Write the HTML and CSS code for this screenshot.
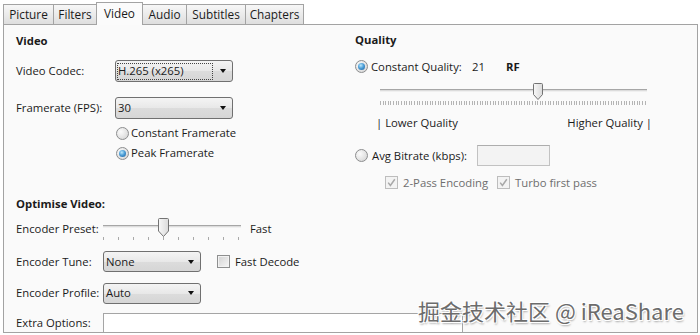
FILE: index.html
```html
<!DOCTYPE html>
<html>
<head>
<meta charset="utf-8">
<link rel="stylesheet" href="styles.css">
</head>
<body>
<div class="tabs">
  <div class="tab t-picture">Picture</div>
  <div class="tab t-filters">Filters</div>
  <div class="tab t-video active">Video</div>
  <div class="tab t-audio">Audio</div>
  <div class="tab t-subs">Subtitles</div>
  <div class="tab t-chap">Chapters</div>
</div>
<div class="panel">
  <div class="col left">
    <div class="heading">Video</div>
    <div class="row r-codec">
      <span class="label lw-top">Video Codec:</span>
      <div class="select s-wide"><span class="focus">H.265 (x265)</span><i class="arrow"></i></div>
    </div>
    <div class="row r-fps">
      <span class="label lw-top">Framerate (FPS):</span>
      <div class="select s-wide"><span class="val">30</span><i class="arrow"></i></div>
    </div>
    <div class="row r-cfr">
      <span class="radio"></span><span class="rtext">Constant Framerate</span>
    </div>
    <div class="row r-pfr">
      <span class="radio checked"></span><span class="rtext">Peak Framerate</span>
    </div>
    <div class="heading h-opt">Optimise Video:</div>
    <div class="row r-preset">
      <span class="label lw-bot">Encoder Preset:</span>
      <div class="slider sl-preset">
        <div class="track"></div>
        <div class="ticks"></div>
        <svg class="thumb" style="left:55px" width="11" height="19" viewBox="0 0 11 19"><defs><linearGradient id="tg1" x1="0" x2="1"><stop offset="0" stop-color="#f8f8f8"/><stop offset="1" stop-color="#dadada"/></linearGradient></defs><path d="M1.5 .5H9.5Q10.5 .5 10.5 1.5V13L5.5 18.5L.5 13V1.5Q.5 .5 1.5 .5Z" fill="url(#tg1)" stroke="#737373"/></svg>
      </div>
      <span class="fast">Fast</span>
    </div>
    <div class="row r-tune">
      <span class="label lw-bot">Encoder Tune:</span>
      <div class="select s-narrow"><span class="val">None</span><i class="arrow"></i></div>
      <span class="check"></span><span class="ctext">Fast Decode</span>
    </div>
    <div class="row r-profile">
      <span class="label lw-bot">Encoder Profile:</span>
      <div class="select s-narrow"><span class="val">Auto</span><i class="arrow"></i></div>
    </div>
    <div class="row r-extra">
      <span class="label lw-bot extra-label">Extra Options:</span>
      <div class="textarea"></div>
    </div>
  </div>
  <div class="col right">
    <div class="heading">Quality</div>
    <div class="row r-cq">
      <span class="radio checked"></span>
      <span class="cq-label">Constant Quality:</span>
      <span class="cq-val">21</span>
      <span class="rf">RF</span>
    </div>
    <div class="slider sl-quality">
      <div class="track"></div>
      <div class="ticks"></div>
      <svg class="thumb" style="left:153px" width="10" height="17" viewBox="0 0 10 17"><defs><linearGradient id="tg2" x1="0" x2="1"><stop offset="0" stop-color="#f8f8f8"/><stop offset="1" stop-color="#dadada"/></linearGradient></defs><path d="M1.5 .5H8.5Q9.5 .5 9.5 1.5V11.5L5 16.5L.5 11.5V1.5Q.5 .5 1.5 .5Z" fill="url(#tg2)" stroke="#737373"/></svg>
    </div>
    <div class="row r-qlabels">
      <span>| Lower Quality</span>
      <span>Higher Quality |</span>
    </div>
    <div class="row r-avg">
      <span class="radio"></span>
      <span class="avg-label">Avg Bitrate (kbps):</span>
      <div class="input"></div>
    </div>
    <div class="row r-checks">
      <svg class="dcheck" width="13" height="13" viewBox="0 0 13 13"><rect x=".5" y=".5" width="12" height="12" fill="#f3f3f3" stroke="#bdbdbd"/><path d="M3.2 6.6L5.4 9.4L9.8 3.3" stroke="#a8a8a8" stroke-width="1.5" fill="none"/></svg>
      <span class="dtext t-2pass">2-Pass Encoding</span>
      <svg class="dcheck" width="13" height="13" viewBox="0 0 13 13"><rect x=".5" y=".5" width="12" height="12" fill="#f3f3f3" stroke="#bdbdbd"/><path d="M3.2 6.6L5.4 9.4L9.8 3.3" stroke="#a8a8a8" stroke-width="1.5" fill="none"/></svg>
      <span class="dtext">Turbo first pass</span>
    </div>
  </div>
  <div class="watermark">掘金技术社区 @ iReaShare</div>
</div>
</body>
</html>
```
FILE: styles.css
```css
* { box-sizing: border-box; }
html, body { margin: 0; padding: 0; }
body {
  width: 700px;
  height: 335px;
  overflow: hidden;
  background: #ffffff;
  font-family: "Open Sans", "Noto Sans", sans-serif;
  font-size: 11.3px;
  color: #1b1b1b;
}

/* Tabs */
.tabs {
  display: flex;
  align-items: flex-end;
  height: 24px;
  padding-left: 3px;
}
.tab {
  height: 20px;
  line-height: 19px;
  text-align: center;
  font-size: 11.8px;
  border: 1px solid #a3a3a3;
  border-bottom: 0;
  margin-right: -1px;
  background: linear-gradient(#f7f7f7, #ebebeb 50%, #dedede);
}
.t-picture { width: 51px; }
.t-filters { width: 44px; }
.t-video { width: 47px; }
.t-audio { width: 45px; }
.t-subs { width: 60px; }
.t-chap { width: 59px; }
.tab.active {
  height: 23px;
  line-height: 21px;
  background: #fbfbfb;
  margin-bottom: -1px;
  position: relative;
  z-index: 1;
}

/* Panel */
.panel {
  position: relative;
  margin-left: 3px;
  width: 695px;
  height: 309px;
  border: 1px solid #a3a3a3;
  background: #fafafa;
  overflow: hidden;
  display: grid;
  grid-template-columns: 339px 1fr;
  padding: 8px 0 0 12px;
}
.col { display: flex; flex-direction: column; }
.heading { font-weight: bold; line-height: 16px; height: 16px; }
.right .heading { margin-top: -1px; }
.row { display: flex; align-items: center; }
.label { line-height: 16px; flex: none; }
.lw-top { width: 99px; }
.lw-bot { width: 87px; }

/* Select */
.select {
  flex: none;
  display: flex;
  align-items: center;
  justify-content: space-between;
  height: 22px;
  border: 1px solid #707070;
  border-radius: 3px;
  background: linear-gradient(#f4f4f4, #e8e8e8 50%, #dcdcdc 51%, #d6d6d6);
  padding: 0 6px 0 2px;
}
.s-wide { width: 118px; }
.s-narrow { width: 98px; height: 21px; }
.select .val { line-height: 16px; }
.select .focus {
  display: block;
  width: 96px;
  height: 17px;
  line-height: 15px;
  outline: 1px dotted #444;
  outline-offset: -1px;
  padding-left: 1px;
  margin-left: -1px;
}
.arrow {
  width: 0;
  height: 0;
  border-left: 3.5px solid transparent;
  border-right: 3.5px solid transparent;
  border-top: 4px solid #111;
}

/* Rows left */
.r-codec { margin-top: 11px; height: 22px; }
.r-fps { margin-top: 15px; height: 22px; }
.r-cfr { margin-top: 5px; height: 18px; padding-left: 100px; }
.r-pfr { margin-top: 2px; height: 18px; padding-left: 100px; }
.h-opt { margin-top: 34px; }
.r-preset { margin-top: 5px; height: 24px; }
.r-tune { margin-top: 10px; height: 21px; }
.r-profile { margin-top: 10px; height: 22px; }
.r-extra { margin-top: 9px; height: 40px; align-items: flex-start; }
.extra-label { padding-top: 2px; }

/* Radio */
.radio {
  flex: none;
  position: relative;
  width: 13px;
  height: 13px;
  border-radius: 50%;
  border: 1px solid #8c8d8e;
  background: radial-gradient(circle at 35% 35%, #fbfbfb, #e4e4e4 55%, #cfcfcf);
}
.radio.checked::after {
  content: "";
  position: absolute;
  left: 2px;
  top: 2px;
  width: 7px;
  height: 7px;
  border-radius: 50%;
  background: radial-gradient(circle at 40% 35%, #bde8fb, #4d9fd8 45%, #1b5c98);
}
.rtext { margin-left: 2px; line-height: 16px; }

/* Checkbox */
.check {
  flex: none;
  width: 13px;
  height: 13px;
  margin-left: 16px;
  border: 1px solid #8e8f8f;
  background: linear-gradient(135deg, #d2d2d2, #f6f6f6);
  box-shadow: inset 0 0 0 1px #f2f2f2;
}
.ctext { margin-left: 5px; line-height: 16px; }

/* Slider */
.slider { position: relative; flex: none; }
.track {
  position: absolute;
  left: 0;
  right: 0;
  height: 3px;
  border-top: 1px solid #a6a6a6;
  border-bottom: 1px solid #f0f0f0;
  background: #dcdcdc;
}
.ticks { position: absolute; left: 0; right: 0; height: 3px; }
.thumb { position: absolute; top: 1px; }
.sl-preset { width: 138px; height: 24px; }
.sl-preset .track { top: 8px; }
.sl-preset .ticks {
  top: 20px;
  background: repeating-linear-gradient(to right, #a9a9a9 0 1px, transparent 1px 15px);
}
.fast { margin-left: 9px; line-height: 16px; }

.sl-quality { width: 267px; height: 25px; margin-top: 7px; margin-left: 25px; }
.sl-quality .track { top: 7px; }
.sl-quality .ticks {
  top: 19px;
  height: 4px;
  background: repeating-linear-gradient(to right, #b4b4b4 0 1px, transparent 1px 2.62px);
}

/* Right rows */
.r-cq { margin-top: 9px; height: 18px; }
.cq-label { margin-left: 3px; width: 101px; flex: none; }
.cq-val { width: 34px; flex: none; }
.rf { font-weight: bold; }
.r-qlabels {
  margin-top: 7px;
  margin-left: 21px;
  width: 276px;
  height: 16px;
  justify-content: space-between;
  color: #1b1b1b;
}
.r-avg { margin-top: 15px; height: 21px; }
.avg-label { margin-left: 4px; width: 105px; flex: none; }
.input {
  flex: none;
  width: 73px;
  height: 21px;
  border: 1px solid #c2c2c2;
  border-top-color: #adadad;
  background: #f3f3f3;
}
.r-checks { margin-top: 8px; height: 16px; margin-left: 30px; }
.dcheck { flex: none; }
.dtext { color: #6e6e6e; margin-left: 5px; }
.t-2pass { width: 94px; flex: none; }

/* Extra options */
.textarea {
  flex: none;
  width: 360px;
  height: 40px;
  background: #ffffff;
  border: 1px solid #a5a5a5;
}

/* Watermark overlay */
.watermark {
  position: absolute;
  right: 13px;
  top: 272px;
  font-family: "Noto Sans CJK SC", "Noto Sans", sans-serif;
  font-size: 22px;
  line-height: 26px;
  color: #6c6c6c;
  text-shadow: 1px 1px 0 #fff, -1px -1px 0 #fff, 1px -1px 0 #fff, -1px 1px 0 #fff, 1px 2px 2px rgba(0,0,0,0.35);
  white-space: nowrap;
}
```
